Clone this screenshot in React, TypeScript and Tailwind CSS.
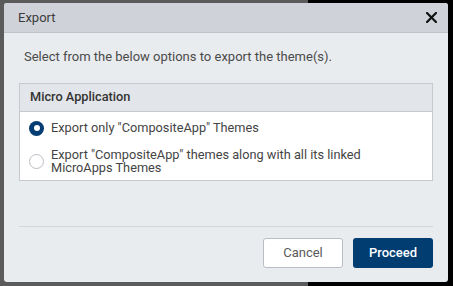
import { useState } from "react";

function Radio({ checked, onClick }: { checked: boolean; onClick: () => void }) {
  return (
    <button
      onClick={onClick}
      className={`shrink-0 w-[15px] h-[15px] rounded-full flex items-center justify-center ${
        checked ? "bg-[#033d73]" : "bg-white border border-[#b9bec4]"
      }`}
    >
      {checked && <span className="w-[6px] h-[6px] rounded-full bg-white" />}
    </button>
  );
}

export default function App() {
  const [choice, setChoice] = useState(0);

  return (
    <div className="w-[453px] h-[286px] bg-[linear-gradient(to_right,#5b5b5b_308px,#000_308px)] pt-[3px] pl-[4px] font-['Roboto',sans-serif]">
      <div className="w-[444px] h-[279px] rounded-[3px] bg-[#e9ecef] flex flex-col overflow-hidden">
        <div className="h-[30px] bg-[#cfd3d9] border-b border-[#bfc4ca] flex items-center justify-between pl-[14px] pr-[10px]">
          <span className="text-[13px] text-[#3b3b3b]">Export</span>
          <svg width="11" height="11" viewBox="0 0 11 11" className="mr-[1px]">
            <path d="M1 1 L10 10 M10 1 L1 10" stroke="#111" strokeWidth="2.2" strokeLinecap="square" />
          </svg>
        </div>

        <div className="flex-1 flex flex-col px-[15px]">
          <p className="mt-[14px] pl-[5px] text-[13px] text-[#4a4a4a]">
            Select from the below options to export the theme(s).
          </p>

          <div className="mt-[16px] border border-[#c6cacf] bg-white">
            <div className="h-[28px] bg-[#e2e5e9] border-b border-[#c6cacf] flex items-center pl-[10px] text-[12.75px] font-medium text-[#333]">
              Micro Application
            </div>
            <div className="flex flex-col pl-[9px] pt-[9px] pb-[5px] gap-[12px] text-[12.75px] text-[#444] leading-[13.5px]">
              <label className="flex items-center gap-[7px]">
                <Radio checked={choice === 0} onClick={() => setChoice(0)} />
                <span>Export only "CompositeApp" Themes</span>
              </label>
              <label className="flex items-center gap-[7px]">
                <Radio checked={choice === 1} onClick={() => setChoice(1)} />
                <span>
                  Export "CompositeApp" themes along with all its linked
                  <br />
                  MicroApps Themes
                </span>
              </label>
            </div>
          </div>

          <div className="mt-[45px] border-t border-[#d3d7db]" />

          <div className="flex justify-end gap-[10px] mt-[11px]">
            <button className="w-[80px] h-[30px] rounded-[3px] bg-white border border-[#b9bec4] text-[13px] text-[#5a5a5a]">
              Cancel
            </button>
            <button className="w-[80px] h-[30px] rounded-[3px] bg-[#023d72] text-[13px] font-medium text-white">
              Proceed
            </button>
          </div>
        </div>
      </div>
    </div>
  );
}
